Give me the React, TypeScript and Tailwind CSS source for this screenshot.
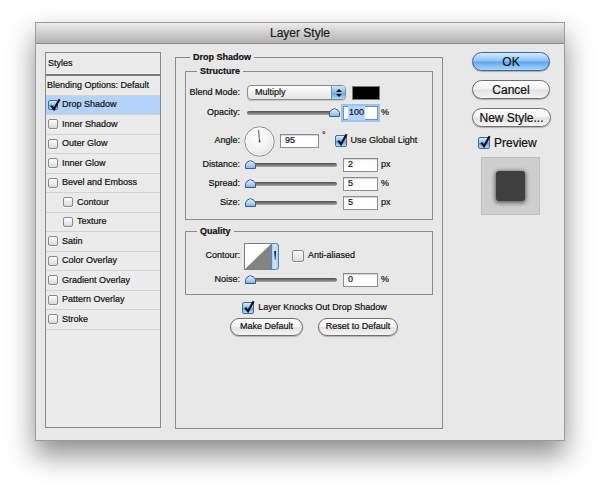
import React from "react";

const styleItems = [
  { label: "Drop Shadow", checked: true, active: true },
  { label: "Inner Shadow" },
  { label: "Outer Glow" },
  { label: "Inner Glow" },
  { label: "Bevel and Emboss" },
  { label: "Contour", sub: true },
  { label: "Texture", sub: true },
  { label: "Satin" },
  { label: "Color Overlay" },
  { label: "Gradient Overlay" },
  { label: "Pattern Overlay" },
  { label: "Stroke" },
];

function CheckBox({ checked, big }: { checked?: boolean; big?: boolean }) {
  const box = big ? "h-[12px] w-[12px]" : "h-[10px] w-[10px]";
  if (!checked) {
    return (
      <span
        className={`${box} shrink-0 rounded-[2px] border border-[#8a8a8a] bg-gradient-to-b from-white to-[#d9d9d9] shadow-[0_1px_0_rgba(255,255,255,0.7)]`}
      />
    );
  }
  return (
    <span
      className={`${box} relative shrink-0 rounded-[2px] border border-[#44699a] bg-[linear-gradient(#d6ebfd,#86bdf0_50%,#5ea6ea_55%,#b6ddfc)]`}
    >
      <svg
        className="absolute left-[0px] top-[-3px] h-[13px] w-[12px] overflow-visible"
        viewBox="0 0 12 13"
      >
        <path d="M2.2 7.6 L5 11.2 L10.6 1.2" fill="none" stroke="#111" strokeWidth="2.2" />
      </svg>
    </span>
  );
}

function StyleList() {
  return (
    <div className="flex h-[376px] w-[116px] shrink-0 flex-col border border-[#8a8a8a] bg-[#ebebeb] text-[9px]">
      <div className="flex h-[23px] items-center border-b-2 border-[#7a7a7a] pl-[2px]">Styles</div>
      <div className="flex h-[19.5px] items-center border-b border-[#d3d3d3] pl-[1px]">
        Blending Options: Default
      </div>
      {styleItems.map((it) => (
        <div
          key={it.label}
          className={`flex h-[19.5px] items-center gap-[4px] border-b border-[#d3d3d3] ${
            it.sub ? "pl-[17px]" : "pl-[2px]"
          } ${it.active ? "bg-[#b4d3fa]" : ""}`}
        >
          <CheckBox checked={it.checked} />
          <span>{it.label}</span>
        </div>
      ))}
    </div>
  );
}

function Thumb() {
  return (
    <svg width="11" height="9" viewBox="0 0 11 9">
      <defs>
        <linearGradient id="thumbg" x1="0" y1="0" x2="0" y2="1">
          <stop offset="0" stopColor="#eef6fe" />
          <stop offset="1" stopColor="#7fb4e8" />
        </linearGradient>
      </defs>
      <path
        d="M0.5 4.5 Q1 2 5.5 0.5 Q10 2 10.5 4.5 L10.5 8.5 L0.5 8.5 Z"
        fill="url(#thumbg)"
        stroke="#3a5c8a"
      />
    </svg>
  );
}

function Slider({ pos }: { pos: number }) {
  return (
    <div className="relative ml-[7px] flex h-[14px] w-[90px] shrink-0 items-center">
      <div className="h-[4px] w-full rounded-full bg-gradient-to-b from-[#4e4e4e] to-[#a8a8a8]" />
      <div className="absolute top-[2px]" style={{ left: pos }}>
        <Thumb />
      </div>
    </div>
  );
}

function Field({ value, focus, w = "w-[35px]" }: { value: string; focus?: boolean; w?: string }) {
  return (
    <div
      className={`flex h-[14px] ${w} shrink-0 items-center border bg-white pl-[4px] text-[9px] ${
        focus
          ? "border-[#6b94c4] shadow-[0_0_0_2px_#9cc3ee]"
          : "border-[#8e8e8e] shadow-[inset_0_1px_1px_rgba(0,0,0,0.18)]"
      }`}
    >
      {focus ? <span className="bg-[#b5d5fd] px-[1px]">{value}</span> : value}
    </div>
  );
}

function Label({ children }: { children: React.ReactNode }) {
  return <span className="w-[53px] shrink-0 text-right text-[9px]">{children}</span>;
}

function SliderRow({
  label,
  pos,
  value,
  unit,
  cls,
}: {
  label: string;
  pos: number;
  value: string;
  unit: string;
  cls: string;
}) {
  return (
    <div className={`flex h-[14px] items-center ${cls}`}>
      <Label>{label}</Label>
      <Slider pos={pos} />
      <div className="ml-[6px]">
        <Field value={value} focus={label === "Opacity:"} />
      </div>
      <span className="ml-[3px] text-[9px]">{unit}</span>
    </div>
  );
}

function Dial() {
  return (
    <svg width="31" height="31" viewBox="0 0 31 31" className="ml-[4px] shrink-0">
      <defs>
        <radialGradient id="dialg" cx="0.45" cy="0.4" r="0.65">
          <stop offset="0" stopColor="#ffffff" />
          <stop offset="0.7" stopColor="#f0f0f0" />
          <stop offset="1" stopColor="#cfcfcf" />
        </radialGradient>
      </defs>
      <circle cx="15.5" cy="15.5" r="14.7" fill="url(#dialg)" stroke="#8a8a8a" />
      <circle cx="15.5" cy="15.5" r="13.6" fill="none" stroke="#ffffff" strokeWidth="0.8" />
      <line x1="15.5" y1="15.5" x2="14.6" y2="4.2" stroke="#555" strokeWidth="1" />
      <circle cx="15.5" cy="15.5" r="1" fill="#333" />
    </svg>
  );
}

function ContourIcon() {
  return (
    <svg width="35" height="27" viewBox="0 0 35 27" className="ml-[4px] shrink-0">
      <defs>
        <linearGradient id="contg" x1="0" y1="0" x2="1" y2="0">
          <stop offset="0" stopColor="#9fcaf3" />
          <stop offset="0.5" stopColor="#d9ecfd" />
          <stop offset="1" stopColor="#8cc0f0" />
        </linearGradient>
      </defs>
      <rect x="0.5" y="0.5" width="27" height="26" fill="#ffffff" stroke="#7d7d7d" />
      <path d="M1 26 L27 1 L27 26 Z" fill="#838383" />
      <path d="M27.5 0.5 L32 0.5 Q34.5 0.5 34.5 3 L34.5 24 Q34.5 26.5 32 26.5 L27.5 26.5 Z" fill="url(#contg)" stroke="#5a84b6" />
      <path d="M30.2 8 L32 8 L31.4 17 L30.8 17 Z" fill="#111" />
    </svg>
  );
}

function SelectBox() {
  return (
    <div className="ml-[7px] flex h-[15px] w-[99px] shrink-0 items-center overflow-hidden rounded-[4px] border border-[#8a8a8a] bg-gradient-to-b from-white to-[#e4e4e4] shadow-[0_1px_1px_rgba(0,0,0,0.15)]">
      <span className="flex-1 pl-[7px] text-[9px]">Multiply</span>
      <span className="flex h-full w-[14px] flex-col items-center justify-center gap-[2px] border-l border-[#6c8fbb] bg-[linear-gradient(#d3e8fc,#83bbef_50%,#5ea5ea_55%,#b4dbfc)]">
        <svg width="6" height="3" viewBox="0 0 6 3">
          <path d="M0 3 L3 0 L6 3 Z" fill="#111" />
        </svg>
        <svg width="6" height="3" viewBox="0 0 6 3">
          <path d="M0 0 L6 0 L3 3 Z" fill="#111" />
        </svg>
      </span>
    </div>
  );
}

function PillButton({
  children,
  primary,
  cls,
}: {
  children: React.ReactNode;
  primary?: boolean;
  cls: string;
}) {
  return (
    <div
      className={`flex items-center justify-center rounded-full border shadow-[0_1px_1px_rgba(0,0,0,0.25)] ${
        primary
          ? "border-[#3d6699] bg-[linear-gradient(#d5eafd,#8dc2f2_48%,#5ba5ec_52%,#a9d7fd)]"
          : "border-[#707070] bg-[linear-gradient(#ffffff,#f3f3f3_48%,#e2e2e2_52%,#f4f4f4)]"
      } ${cls}`}
    >
      {children}
    </div>
  );
}

function DropShadowPanel() {
  return (
    <fieldset className="ml-[14px] h-[377px] w-[268px] shrink-0 border border-[#8c8c8c] px-[9px]">
      <legend className="ml-[5px] px-[3px] text-[9px] font-bold leading-[10px]">Drop Shadow</legend>

      <fieldset className="mt-[4px] border border-[#8c8c8c] pb-[9px] pl-[1px] pt-[9px]">
        <legend className="ml-[10px] px-[3px] text-[9px] font-bold leading-[10px]">Structure</legend>

        <div className="flex h-[15px] items-center">
          <Label>Blend Mode:</Label>
          <SelectBox />
          <span className="ml-[6px] h-[14px] w-[28px] border border-[#7a7a7a] bg-black" />
        </div>

        <SliderRow label="Opacity:" pos={82} value="100" unit="%" cls="mt-[6px]" />

        <div className="mt-[6px] flex h-[30px] items-center">
          <Label>Angle:</Label>
          <Dial />
          <div className="ml-[5px]">
            <Field value="95" w="w-[39px]" />
          </div>
          <span className="ml-[3px] self-start pt-[5px] text-[9px] leading-[9px]">°</span>
          <span className="ml-[9px] flex items-center gap-[4px] text-[9px]">
            <CheckBox checked big />
            Use Global Light
          </span>
        </div>

        <SliderRow label="Distance:" pos={-2} value="2" unit="px" cls="mt-[2px]" />
        <SliderRow label="Spread:" pos={-2} value="5" unit="%" cls="mt-[5px]" />
        <SliderRow label="Size:" pos={-2} value="5" unit="px" cls="mt-[5px]" />
      </fieldset>

      <fieldset className="mt-[6px] border border-[#8c8c8c] pb-[7px] pl-[1px] pt-[7px]">
        <legend className="ml-[10px] px-[3px] text-[9px] font-bold leading-[10px]">Quality</legend>
        <div className="flex h-[26px] items-center">
          <Label>Contour:</Label>
          <ContourIcon />
          <span className="ml-[13px] flex items-center gap-[4px] text-[9px]">
            <CheckBox big />
            Anti-aliased
          </span>
        </div>
        <SliderRow label="Noise:" pos={-2} value="0" unit="%" cls="mt-[4px]" />
      </fieldset>

      <div className="mt-[7px] flex h-[12px] items-center justify-center gap-[4px] pl-[11px] text-[9px]">
        <CheckBox checked big />
        Layer Knocks Out Drop Shadow
      </div>

      <div className="mt-[4px] flex justify-center gap-[15px] pl-[10px] text-[9px]">
        <PillButton cls="h-[18px] w-[73px]">Make Default</PillButton>
        <PillButton cls="h-[18px] w-[80px]">Reset to Default</PillButton>
      </div>
    </fieldset>
  );
}

function ActionColumn() {
  return (
    <div className="ml-[29px] flex w-[78px] shrink-0 flex-col text-[12px]">
      <PillButton primary cls="h-[19px] w-[78px]">
        OK
      </PillButton>
      <PillButton cls="mt-[9px] h-[19px] w-[78px]">Cancel</PillButton>
      <PillButton cls="mt-[9px] h-[19px] w-[79px]">New Style...</PillButton>
      <div className="ml-[6px] mt-[9px] flex h-[13px] items-center gap-[4px]">
        <CheckBox checked big />
        <span>Preview</span>
      </div>
      <div className="ml-[9px] mt-[8px] flex h-[58px] w-[59px] items-center justify-center border border-[#bdbdbd] bg-[#cfcfcf]">
        <div className="h-[30px] w-[29px] rounded-[3px] bg-[#3f3f3f] shadow-[0_1px_4px_1px_rgba(0,0,0,0.55)]" />
      </div>
    </div>
  );
}

export default function App() {
  return (
    <div className="h-[489px] w-[600px] overflow-hidden bg-white pl-[35px] pt-[22px] text-[#111] [font-family:'Liberation_Sans',Arial,sans-serif] [-webkit-text-stroke:0.2px_#111]">
      <div className="flex h-[419px] w-[530px] flex-col border border-[#9c9c9c] bg-[#e8e8e8] shadow-[0_14px_26px_rgba(0,0,0,0.45)]">
        <div className="flex h-[21px] shrink-0 items-center justify-center border-b border-[#8d8d8d] bg-gradient-to-b from-[#ececec] to-[#b3b3b3] text-[12px] text-[#222]">
          Layer Style
        </div>
        <div className="flex flex-1 pl-[9px] pt-[8px]">
          <StyleList />
          <DropShadowPanel />
          <ActionColumn />
        </div>
      </div>
    </div>
  );
}
